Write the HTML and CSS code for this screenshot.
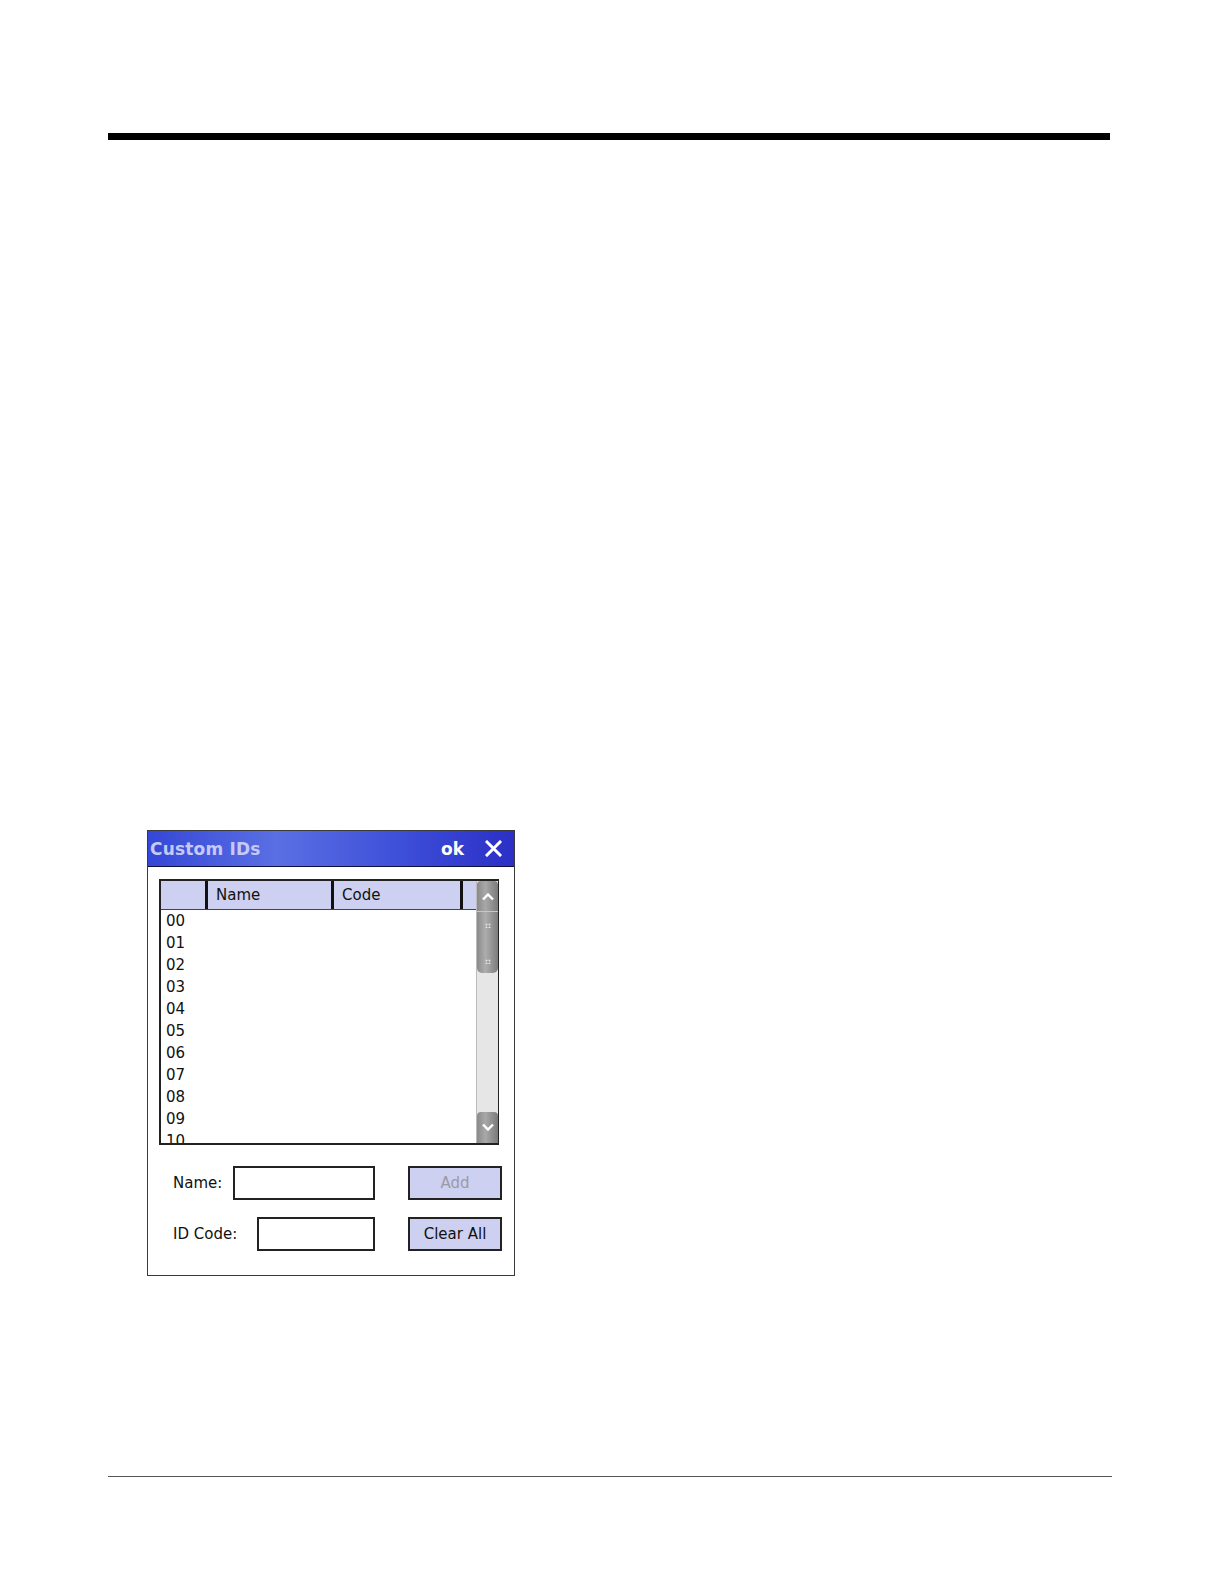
FILE: index.html
```html
<!DOCTYPE html>
<html>
<head>
<meta charset="utf-8">
<link rel="stylesheet" href="styles.css">
</head>
<body>
<div class="page">
  <div class="rule-top"></div>
  <div class="dialog">
    <div class="titlebar">
      <span class="title">Custom IDs</span>
      <span class="ok">ok</span>
      <svg class="close" width="17" height="17" viewBox="0 0 17 17"><path d="M2 2L15 15M15 2L2 15" stroke="#fff" stroke-width="3" stroke-linecap="square"/></svg>
    </div>
    <div class="dbody">
      <div class="listbox">
        <div class="listmain">
          <div class="lhead">
            <div class="hc c0"></div>
            <div class="hc c1">Name</div>
            <div class="hc c2">Code</div>
            <div class="hc c3"></div>
          </div>
          <div class="rows">
            <div class="row">00</div>
            <div class="row">01</div>
            <div class="row">02</div>
            <div class="row">03</div>
            <div class="row">04</div>
            <div class="row">05</div>
            <div class="row">06</div>
            <div class="row">07</div>
            <div class="row">08</div>
            <div class="row">09</div>
            <div class="row">10</div>
          </div>
        </div>
        <div class="scrollbar">
          <div class="sbtn up"><svg width="14" height="9" viewBox="0 0 14 9"><path d="M2 7.5L7 2.5L12 7.5" fill="none" stroke="#fff" stroke-width="2.4"/></svg></div>
          <div class="thumb">
            <span class="grip"></span>
            <span class="grip"></span>
          </div>
          <div class="track"></div>
          <div class="sbtn down"><svg width="14" height="9" viewBox="0 0 14 9"><path d="M2 1.5L7 6.5L12 1.5" fill="none" stroke="#fff" stroke-width="2.4"/></svg></div>
        </div>
      </div>
      <div class="form">
        <div class="frow">
          <div class="field"><span class="lbl">Name:</span><span class="inp w1"></span></div>
          <div class="btn disabled">Add</div>
        </div>
        <div class="frow">
          <div class="field"><span class="lbl">ID Code:</span><span class="inp w2"></span></div>
          <div class="btn">Clear All</div>
        </div>
      </div>
    </div>
  </div>
  <div class="rule-bottom"></div>
</div>
</body>
</html>
```
FILE: styles.css
```css
html, body { margin: 0; padding: 0; background: #fff; }
body { font-family: "DejaVu Sans", Tahoma, sans-serif; color: #000; overflow: hidden; }
.page {
  padding: 133px 0 0 108px;
  display: flex;
  flex-direction: column;
  align-items: flex-start;
}
.rule-top { width: 1002px; height: 7px; background: #000; }
.dialog {
  margin-top: 690px;
  margin-left: 39px;
  width: 368px;
  height: 446px;
  box-sizing: border-box;
  border: 1px solid #3a3a3a;
  background: #fff;
  display: flex;
  flex-direction: column;
}
.titlebar {
  height: 36px;
  box-sizing: border-box;
  border-bottom: 1px solid #101040;
  background: linear-gradient(to right, #3447d6 0%, #5a6fe3 35%, #3d4ed8 70%, #2b2fc6 100%);
  display: flex;
  align-items: center;
  padding: 0 12px 0 2px;
}
.title { font-weight: bold; font-size: 17px; color: #c4c9f6; flex: 1; letter-spacing: 0.2px; }
.ok { font-weight: bold; font-size: 17px; color: #fff; margin-right: 21px; }
.close { display: block; }
.dbody { padding: 12px 0 0 11px; display: flex; flex-direction: column; }
.listbox {
  width: 340px;
  height: 266px;
  box-sizing: border-box;
  border: 2px solid #222;
  border-right-width: 1px;
  display: flex;
  overflow: hidden;
}
.listmain { flex: 1; display: flex; flex-direction: column; overflow: hidden; }
.lhead {
  height: 29px;
  flex: none;
  box-sizing: border-box;
  background: #cdd0f0;
  border-bottom: 1px solid #444;
  display: flex;
}
.hc {
  box-sizing: border-box;
  font-size: 15px;
  line-height: 28px;
  padding-left: 8px;
  color: #111;
}
.c0 { width: 47px; border-right: 3px solid #111; }
.c1 { width: 126px; border-right: 3px solid #111; }
.c2 { width: 129px; border-right: 3px solid #111; }
.c3 { flex: 1; }
.rows { padding-left: 5px; }
.row { height: 22px; line-height: 22px; font-size: 15px; color: #111; }
.scrollbar {
  width: 21px;
  display: flex;
  flex-direction: column;
  background: #e6e6e6;
  border-left: 1px solid #bbb;
}
.sbtn {
  height: 30px;
  flex: none;
  display: flex;
  align-items: center;
  justify-content: center;
  background: linear-gradient(to right, #8a8a8a, #a8a8a8 40%, #7a7a7a);
}
.sbtn.up { border-radius: 4px 4px 0 0; }
.sbtn.down { height: 31px; border-radius: 4px 4px 0 0; }
.thumb {
  height: 62px;
  flex: none;
  box-sizing: border-box;
  border-top: 1px solid #c8c8c8;
  border-radius: 0 0 5px 5px;
  background: linear-gradient(to right, #8a8a8a, #adadad 40%, #7c7c7c);
  display: flex;
  flex-direction: column;
  align-items: center;
  justify-content: space-between;
  padding: 11px 0 9px;
}
.grip {
  width: 6px;
  height: 5px;
  background:
    radial-gradient(circle, #e0e0e0 0.8px, transparent 1.2px) 0 0 / 3px 3px;
}
.track { flex: 1; }
.form { display: flex; flex-direction: column; gap: 17px; margin-top: 21px; padding-left: 14px; }
.frow { display: flex; align-items: center; height: 34px; }
.field { width: 202px; display: flex; align-items: center; justify-content: space-between; }
.lbl { font-size: 15px; color: #111; }
.inp {
  height: 34px;
  box-sizing: border-box;
  border: 2px solid #222;
  background: #fff;
}
.w1 { width: 142px; }
.w2 { width: 118px; }
.btn {
  margin-left: 33px;
  width: 94px;
  height: 34px;
  box-sizing: border-box;
  border: 2px solid #222;
  background: #cdd0f0;
  display: flex;
  align-items: center;
  justify-content: center;
  font-size: 15px;
  color: #111;
}
.btn.disabled { color: #9a9aa8; }
.rule-bottom { margin-top: 200px; width: 1004px; height: 1px; background: #555; }
```
